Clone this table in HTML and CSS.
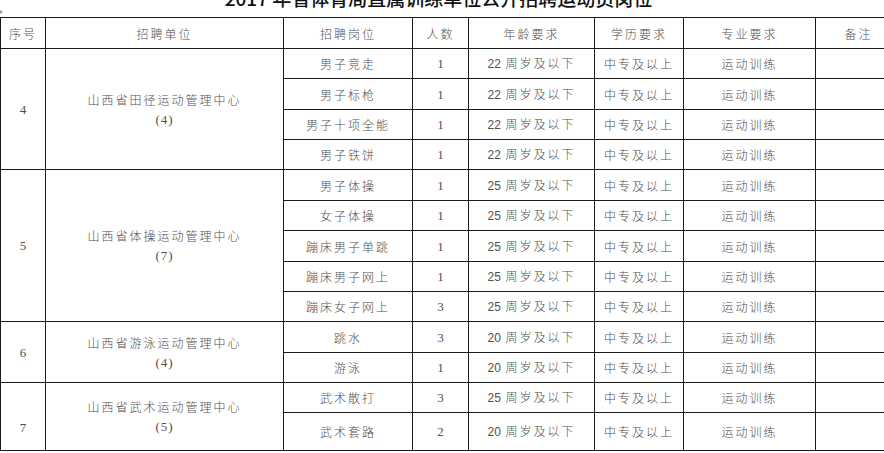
FILE: index.html
```html
<!DOCTYPE html>
<html lang="zh-CN">
<head>
<meta charset="utf-8">
<title>2017 年省体育局直属训练单位公开招聘运动员岗位</title>
<link rel="stylesheet" href="styles.css">
</head>
<body>
<div class="page">
  <h1 class="title">2017 年省体育局直属训练单位公开招聘运动员岗位</h1>
  <span class="handle"></span>
  <table class="jobs">
    <colgroup>
      <col class="c-seq"><col class="c-unit"><col class="c-post"><col class="c-num">
      <col class="c-age"><col class="c-edu"><col class="c-major"><col class="c-note">
    </colgroup>
    <thead>
      <tr class="r31">
        <th>序号</th><th>招聘单位</th><th>招聘岗位</th><th>人数</th>
        <th>年龄要求</th><th>学历要求</th><th>专业要求</th><th>备注</th>
      </tr>
    </thead>
    <tbody>
      <tr class="r30">
        <td rowspan="4" class="seq">4</td>
        <td rowspan="4" class="unit">山西省田径运动管理中心<br><span class="n">(4)</span></td>
        <td>男子竞走</td><td class="num">1</td><td><span class="n">22</span> 周岁及以下</td><td>中专及以上</td><td>运动训练</td><td></td>
      </tr>
      <tr class="r31"><td>男子标枪</td><td class="num">1</td><td><span class="n">22</span> 周岁及以下</td><td>中专及以上</td><td>运动训练</td><td></td></tr>
      <tr class="r30"><td>男子十项全能</td><td class="num">1</td><td><span class="n">22</span> 周岁及以下</td><td>中专及以上</td><td>运动训练</td><td></td></tr>
      <tr class="r30"><td>男子铁饼</td><td class="num">1</td><td><span class="n">22</span> 周岁及以下</td><td>中专及以上</td><td>运动训练</td><td></td></tr>

      <tr class="r31">
        <td rowspan="5" class="seq">5</td>
        <td rowspan="5" class="unit">山西省体操运动管理中心<br><span class="n">(7)</span></td>
        <td>男子体操</td><td class="num">1</td><td><span class="n">25</span> 周岁及以下</td><td>中专及以上</td><td>运动训练</td><td></td>
      </tr>
      <tr class="r30"><td>女子体操</td><td class="num">1</td><td><span class="n">25</span> 周岁及以下</td><td>中专及以上</td><td>运动训练</td><td></td></tr>
      <tr class="r31"><td>蹦床男子单跳</td><td class="num">1</td><td><span class="n">25</span> 周岁及以下</td><td>中专及以上</td><td>运动训练</td><td></td></tr>
      <tr class="r30"><td>蹦床男子网上</td><td class="num">1</td><td><span class="n">25</span> 周岁及以下</td><td>中专及以上</td><td>运动训练</td><td></td></tr>
      <tr class="r30"><td>蹦床女子网上</td><td class="num">3</td><td><span class="n">25</span> 周岁及以下</td><td>中专及以上</td><td>运动训练</td><td></td></tr>

      <tr class="r31">
        <td rowspan="2" class="seq">6</td>
        <td rowspan="2" class="unit">山西省游泳运动管理中心<br><span class="n">(4)</span></td>
        <td>跳水</td><td class="num">3</td><td><span class="n">20</span> 周岁及以下</td><td>中专及以上</td><td>运动训练</td><td></td>
      </tr>
      <tr class="r30"><td>游泳</td><td class="num">1</td><td><span class="n">20</span> 周岁及以下</td><td>中专及以上</td><td>运动训练</td><td></td></tr>

      <tr class="r30">
        <td rowspan="2" class="seq seq-low">7</td>
        <td rowspan="2" class="unit">山西省武术运动管理中心<br><span class="n">(5)</span></td>
        <td>武术散打</td><td class="num">3</td><td><span class="n">25</span> 周岁及以下</td><td>中专及以上</td><td>运动训练</td><td></td>
      </tr>
      <tr class="r38"><td>武术套路</td><td class="num">2</td><td><span class="n">20</span> 周岁及以下</td><td>中专及以上</td><td>运动训练</td><td></td></tr>
    </tbody>
  </table>
</div>
</body>
</html>
```

FILE: styles.css
```css
html, body {
  margin: 0;
  padding: 0;
  background: #ffffff;
  overflow: hidden;
}

.page {
  position: relative;
  width: 884px;
  height: 453px;
  overflow: hidden;
  font-family: "Noto Sans CJK SC", sans-serif;
}

.title {
  margin: -12px 0 10px;
  padding-right: 7px;
  height: 19px;
  font-family: "Noto Sans CJK SC", sans-serif;
  font-size: 19px;
  line-height: 19px;
  font-weight: 500;
  color: #111;
  text-align: center;
  white-space: nowrap;
}

.handle {
  position: absolute;
  left: 0;
  top: 10px;
  width: 0;
  height: 0;
  border-left: 3px solid #9a9a9a;
  border-top: 2px solid transparent;
  border-bottom: 2px solid transparent;
}

.jobs {
  table-layout: fixed;
  border-collapse: separate;
  border-spacing: 0;
  width: 901px;
  border-top: 1px solid #1a1a1a;
  border-left: 1px solid #1a1a1a;
  color: #505050;
  font-size: 12px;
  font-weight: 300;
}

.c-seq { width: 45px; }
.c-unit { width: 238px; }
.c-post { width: 129px; }
.c-num { width: 56px; }
.c-age { width: 126px; }
.c-edu { width: 89px; }
.c-major { width: 132px; }
.c-note { width: 86px; }

.jobs th,
.jobs td {
  padding: 0;
  border-right: 1px solid #1a1a1a;
  border-bottom: 1px solid #1a1a1a;
  text-align: center;
  vertical-align: middle;
  font-weight: 300;
  letter-spacing: 2px;
  white-space: nowrap;
  line-height: 19px;
}

.r30 { height: 30px; }
.r31 { height: 31px; }
.r38 { height: 38px; }

.jobs .n {
  font-family: "Liberation Sans", sans-serif;
  font-weight: normal;
  letter-spacing: 0;
  font-size: 12px;
}

.jobs .num,
.jobs .seq {
  font-family: "Liberation Serif", serif;
  font-weight: normal;
  font-size: 13px;
  letter-spacing: 0;
}

.jobs .unit .n {
  font-family: "Liberation Serif", serif;
  font-size: 13px;
  letter-spacing: 1px;
}

.jobs .seq-low {
  padding-top: 21px;
}
```
